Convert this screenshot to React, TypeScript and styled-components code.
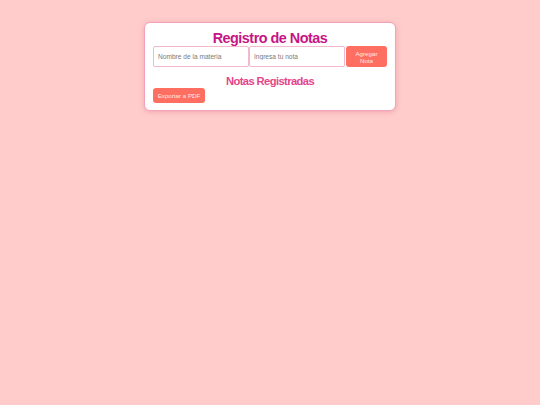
import React, { useState } from 'react'
import styled, { createGlobalStyle } from 'styled-components'

const GlobalStyle = createGlobalStyle`
  html, body {
    margin: 0;
    padding: 0;
    background: #ffcccb;
    font-family: 'Liberation Sans', Arial, sans-serif;
  }
`

const Page = styled.div`
  min-height: 405px;
  display: flex;
  justify-content: center;
  align-items: flex-start;
  padding-top: 22px;
  box-sizing: border-box;
`

const Card = styled.div`
  width: 252px;
  box-sizing: border-box;
  background: #ffffff;
  border: 1px solid #f3a3b9;
  border-radius: 6px;
  box-shadow: 0 1px 5px rgba(210, 90, 120, 0.35);
  padding: 7px 8px 7px 8px;
`

const Title = styled.h1`
  margin: 0;
  text-align: center;
  color: #c71585;
  font-size: 14.4px;
  font-weight: bold;
  letter-spacing: -0.5px;
  line-height: 16px;
`

const FormRow = styled.div`
  display: flex;
  align-items: stretch;
`

const Field = styled.input`
  width: 96px;
  height: 21px;
  box-sizing: border-box;
  border: 1px solid #f2b8cc;
  border-radius: 2px;
  padding: 0 4px;
  font-family: 'Liberation Sans', Arial, sans-serif;
  font-size: 6.6px;
  color: #555;
  outline: none;
  &::placeholder {
    color: #7a7a7a;
  }
`

const Button = styled.button`
  background: #ff6f61;
  color: #ffe6e3;
  border: none;
  border-radius: 3px;
  font-family: 'Liberation Sans', Arial, sans-serif;
  font-size: 6.2px;
  line-height: 7px;
  cursor: pointer;
  padding: 0 6px;
`

const AddButton = styled(Button)`
  width: 42px;
  height: 21px;
  margin-left: 1px;
  padding: 0 8px;
`

const Subtitle = styled.h2`
  margin: 7px 0 0 0;
  text-align: center;
  color: #e4458a;
  font-size: 11.2px;
  font-weight: bold;
  letter-spacing: -0.6px;
  line-height: 14px;
`

const ExportButton = styled(Button)`
  height: 15px;
  width: 52px;
  padding: 0;
  white-space: nowrap;
  display: block;
`

export default function App() {
  const [materia, setMateria] = useState('')
  const [nota, setNota] = useState('')

  return (
    <>
      <GlobalStyle />
      <Page>
        <Card>
          <Title>Registro de Notas</Title>
          <FormRow>
            <Field
              placeholder="Nombre de la materia"
              value={materia}
              onChange={(e) => setMateria(e.target.value)}
            />
            <Field placeholder="Ingresa tu nota" value={nota} onChange={(e) => setNota(e.target.value)} />
            <AddButton>Agregar Nota</AddButton>
          </FormRow>
          <Subtitle>Notas Registradas</Subtitle>
          <ExportButton>Exportar a PDF</ExportButton>
        </Card>
      </Page>
    </>
  )
}
